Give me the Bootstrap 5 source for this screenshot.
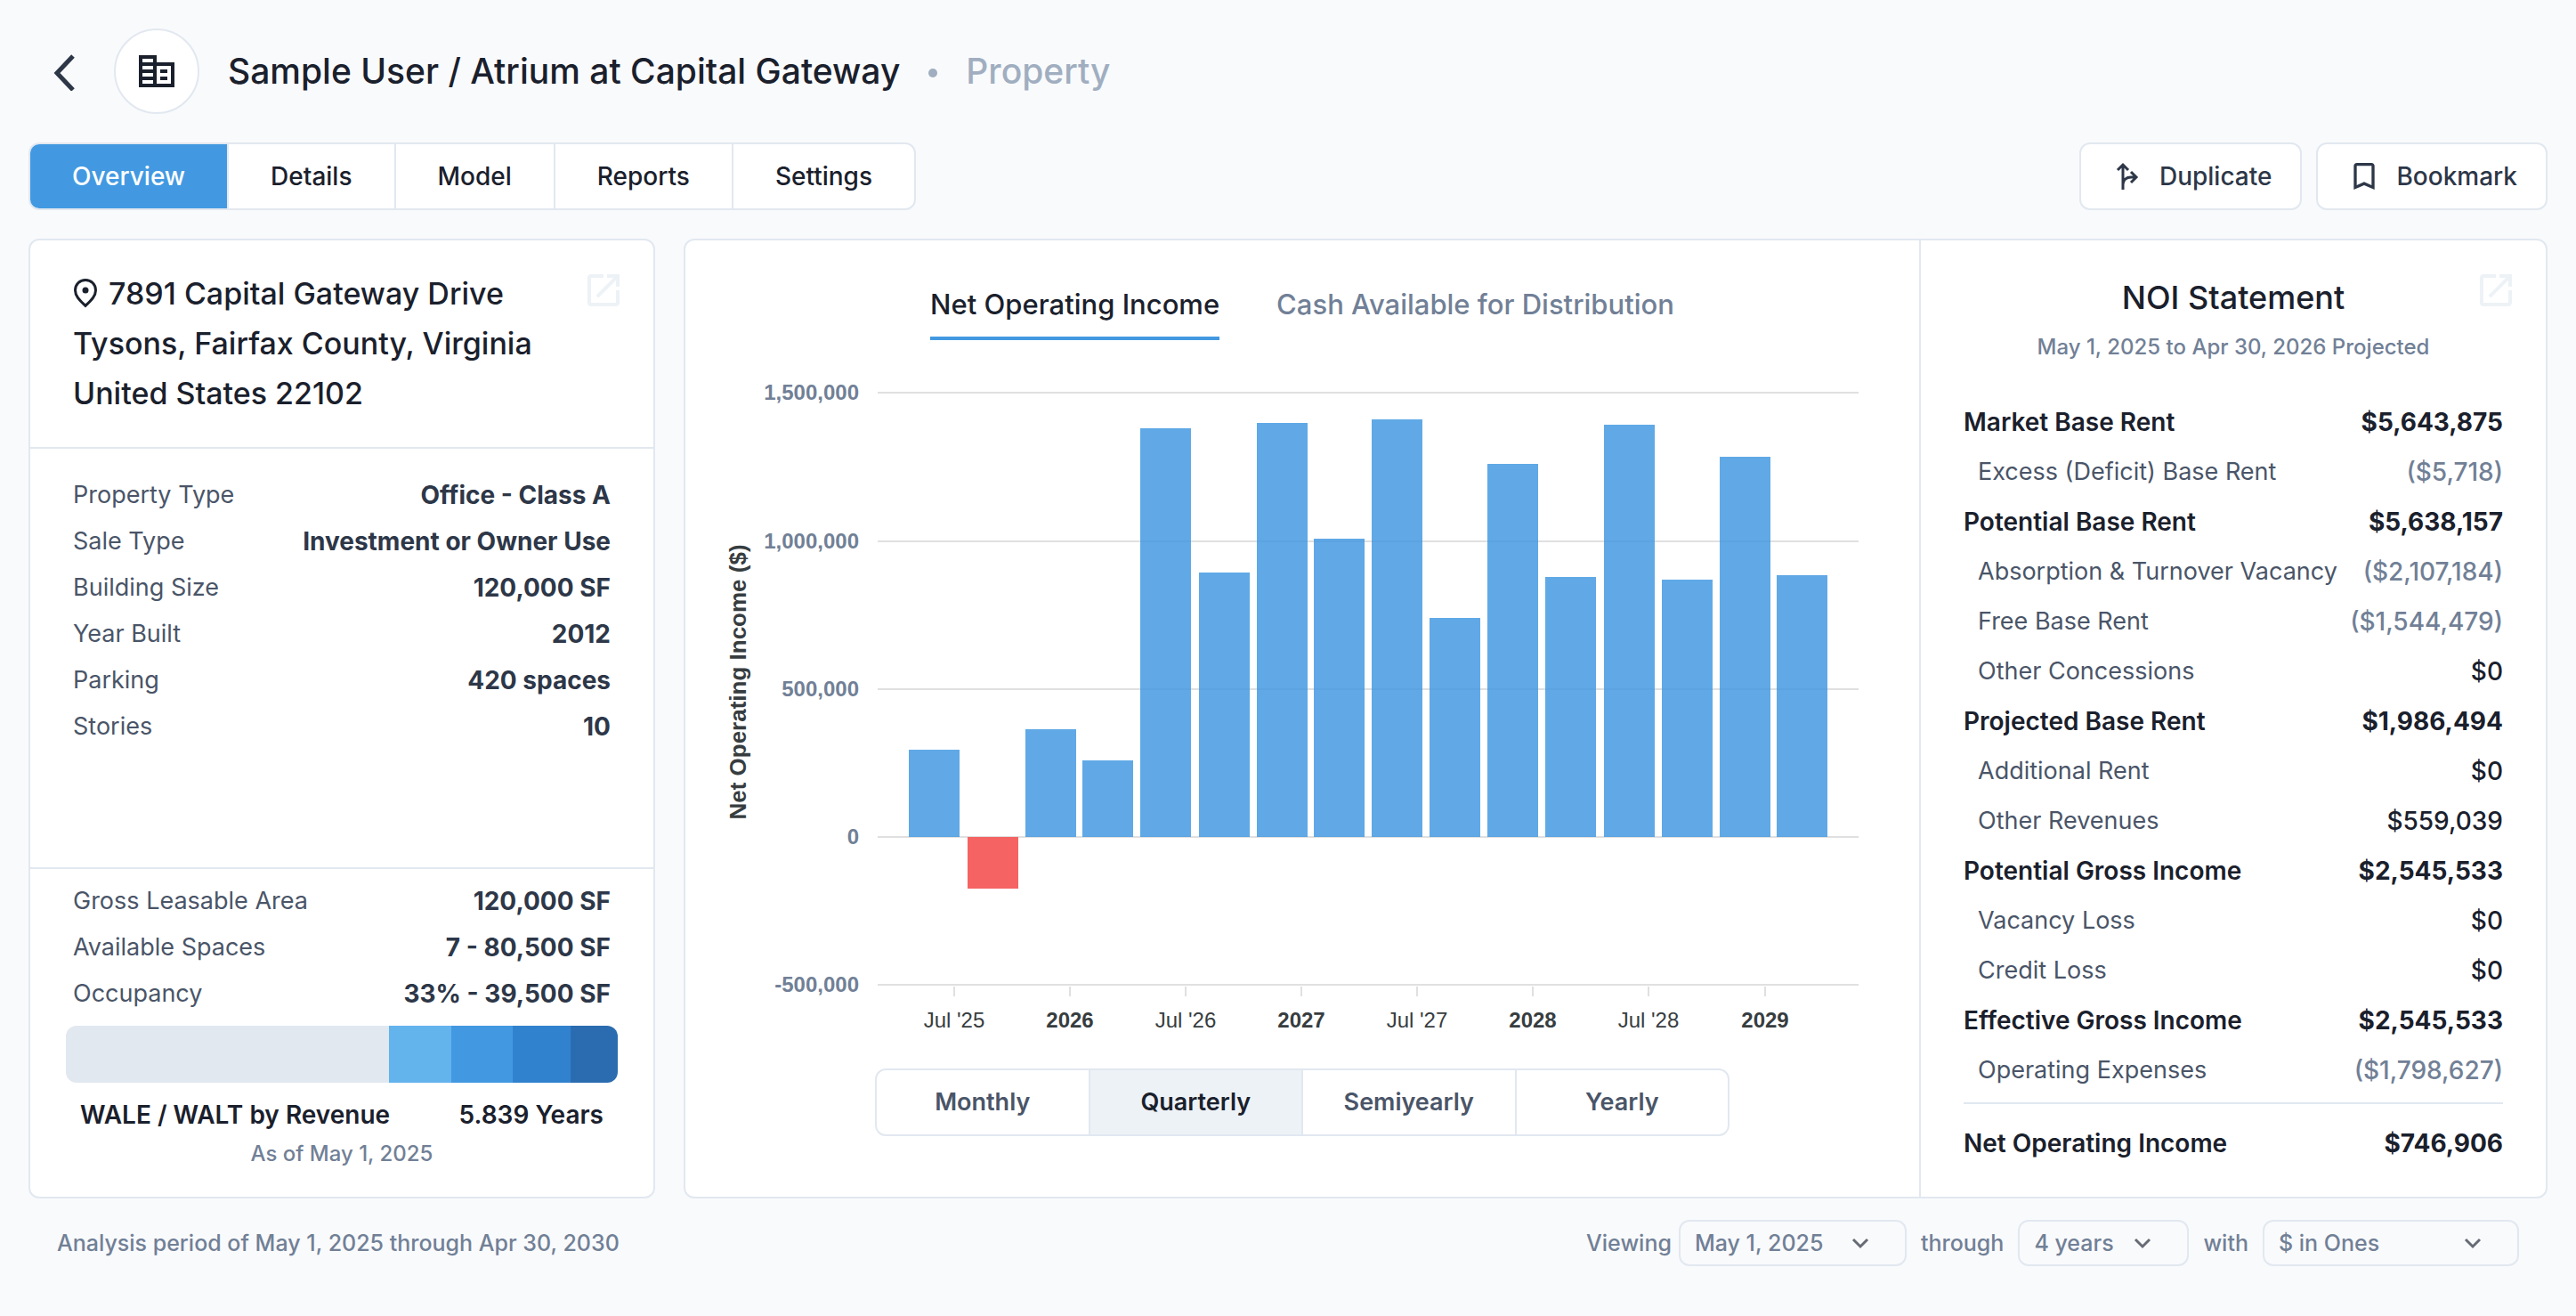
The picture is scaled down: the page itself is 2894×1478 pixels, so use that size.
<!DOCTYPE html>
<html lang="en">
<head>
<meta charset="utf-8">
<meta name="viewport" content="width=device-width, initial-scale=1">
<title>Atrium at Capital Gateway</title>
<link href="https://cdn.jsdelivr.net/npm/bootstrap@5.3.0/dist/css/bootstrap.min.css" rel="stylesheet">
<style>
  :root {
    --line: #e2e8f0;
    --ink: #1a202c;
    --ink-2: #2d3748;
    --ink-3: #4a5568;
    --ink-4: #718096;
    --ink-5: #a0aec0;
    --accent: #4299e1;
  }
  body { font-family: Inter, "Liberation Sans", sans-serif; background: #f9fafc; color: var(--ink); font-size: 28px; }
  .page { padding: 32px; }
  svg { display: block; flex: none; }
  a { text-decoration: none; }

  .back-link { width: 32px; margin: 0 40px 0 24px; color: var(--ink-2); }
  .avatar { width: 96px; height: 96px; border: 2px solid var(--line); border-radius: 50%; background: #fff; }
  .page-title { font-size: 39px; line-height: 56px; font-weight: 500; }
  .page-title .dot { width: 10px; height: 10px; border-radius: 50%; background: var(--ink-5); margin: 4px 32px 0; }
  .page-title .kind { color: var(--ink-5); }
  .toolbar { margin: 32px 0; }
  .panels { gap: 32px; }

  .seg { border: 2px solid var(--line); border-radius: 12px; background: #fff; overflow: hidden; }
  .seg .seg-item { border: 0; border-left: 2px solid var(--line); background: transparent; color: var(--ink);
    font-size: 28px; line-height: 40px; font-weight: 500; padding: 16px 47px; text-align: center; }
  .seg .seg-item:first-child { border-left: 0; }
  .seg-main .seg-item.active { background: var(--accent); color: #fff; }
  .seg-period { width: 960px; margin: 0 auto; }
  .seg-period .seg-item { flex: 1 1 0; padding: 16px 0; font-size: 27px; color: var(--ink-3); font-weight: 600; }
  .seg-period .seg-item.active { background: #edf2f7; color: var(--ink); }

  .tool-btn { border: 2px solid var(--line); border-radius: 12px; background: #fff; color: var(--ink-2);
    font-size: 28px; line-height: 40px; font-weight: 500; padding: 16px 32px; gap: 16px; }

  .panel { background: #fff; border: 2px solid var(--line); border-radius: 12px; }
  .panel-side { width: 704px; flex: none; }
  .panel-noi { width: 704px; flex: none; border-left: 2px solid var(--line); }
  .open-link { color: #edf2f7; }
  .address { font-size: 34px; line-height: 56px; font-weight: 500; padding: 32px 32px 32px 48px; border-bottom: 2px solid var(--line); }
  .address address { line-height: 56px; }
  .address .pin { display: inline-block; margin-right: 12px; vertical-align: -4px; }

  .facts { padding: 26px 48px; }
  .facts-space { padding: 10px 40px 32px; border-top: 2px solid var(--line); }
  .fact { line-height: 52px; }
  .facts-space .fact { padding: 0 8px; }
  .fact dt { font-size: 27px; font-weight: 400; color: var(--ink-3); }
  .fact dd { font-weight: 700; color: var(--ink-2); margin: 0; }
  .stack-bar { height: 64px; border-radius: 12px; margin: 10px 0 16px; overflow: hidden; }
  .wale { font-weight: 600; line-height: 40px; padding: 0 16px; }
  .note { font-size: 24px; line-height: 32px; font-weight: 500; color: var(--ink-4); }

  .chart-tabs { gap: 64px; padding-top: 40px; }
  .chart-tabs a { font-size: 31px; line-height: 64px; font-weight: 500; color: var(--ink-4); padding-bottom: 4px; border-bottom: 4px solid transparent; }
  .chart-tabs a.active { color: var(--ink); border-color: var(--accent); }
  .chart { width: 100%; height: auto; font-family: "Liberation Sans", Arial, sans-serif; font-size: 24px; }

  .noi-head { padding-top: 40px; }
  .noi-head h2 { font-size: 36px; line-height: 48px; font-weight: 500; margin: 0 0 16px; }
  .noi-open { top: 32px; right: 32px; }
  .noi-box { padding: 40px 48px 32px; }
  .noi-table { width: 100%; }
  .noi-table th, .noi-table td { line-height: 56px; padding: 0; white-space: nowrap; }
  .noi-table th { font-size: 27px; font-weight: 400; color: var(--ink-3); padding-left: 16px; }
  .noi-table td { text-align: right; font-weight: 500; }
  .noi-table td.neg { color: var(--ink-4); }
  .noi-table .sum th { font-size: 28px; font-weight: 600; color: var(--ink); padding-left: 0; }
  .noi-table .sum td { font-weight: 700; }
  .noi-table tbody tr:last-child > * { padding-bottom: 8px; }
  .noi-table tfoot tr > * { border-top: 2px solid var(--line); padding-top: 16px; }

  .foot { font-size: 25px; line-height: 52px; font-weight: 500; color: var(--ink-4); padding: 24px 32px 0; }
  .foot .form-select { height: 52px; border: 2px solid var(--line); border-radius: 12px; padding: 0 56px 0 16px;
    font-size: 25px; line-height: 32px; font-weight: 500; color: var(--ink-4); background-color: transparent;
    background-image: url("data:image/svg+xml,%3Csvg xmlns='http://www.w3.org/2000/svg' viewBox='0 0 24 24'%3E%3Cpath d='M4 8l8 8 8-8' fill='none' stroke='%23666b75' stroke-width='3'/%3E%3C/svg%3E");
    background-position: right 38px center; background-size: 24px 24px; }
  .sel-date { width: 256px; }
  .sel-span { width: 192px; }
  .sel-unit { width: 288px; }
</style>
</head>
<body>
<div class="page">
  <header class="d-flex align-items-center">
    <a href="#" class="back-link" aria-label="Back">
      <svg width="32" height="44" viewBox="0 0 32 44" fill="none" stroke="currentColor" stroke-width="5"><path d="M26 5 8 24l18 19"/></svg>
    </a>
    <span class="avatar d-flex align-items-center justify-content-center">
      <svg width="40" height="36" viewBox="0 0 10 9" fill="#1a202c" fill-rule="evenodd" shape-rendering="crispEdges"><path d="M0 0h5v2h5v7H0zM1 1v1h3V1zM1 3v1h3V3zM1 5v1h3V5zM1 7v1h3V7zM5 3v5h4V3z"/><path d="M6 4h2v1H6zM6 6h2v1H6z"/></svg>
    </span>
    <h1 class="page-title d-flex align-items-center mb-0 ps-4 ms-2">
      <span>Sample User / Atrium at Capital Gateway</span><span class="dot"></span><span class="kind">Property</span>
    </h1>
  </header>

  <div class="toolbar d-flex justify-content-between">
    <nav class="seg seg-main d-flex" aria-label="Sections">
      <a href="#" class="seg-item active" aria-current="page">Overview</a>
      <a href="#" class="seg-item">Details</a>
      <a href="#" class="seg-item">Model</a>
      <a href="#" class="seg-item">Reports</a>
      <a href="#" class="seg-item">Settings</a>
    </nav>
    <div class="d-flex gap-3">
      <button type="button" class="tool-btn d-flex align-items-center">
        <svg width="40" height="40" viewBox="0 0 40 40" fill="none" stroke="currentColor" stroke-width="3"><path d="M15 35V8M9 13l6-6 6 6M15 29c0-5 4-8 9-8h6M24 15l6 6-6 6"/></svg>
        Duplicate
      </button>
      <button type="button" class="tool-btn d-flex align-items-center">
        <svg width="40" height="40" viewBox="0 0 24 24" fill="currentColor"><path d="M17 3H7c-1.100 0-1.990.9-1.990 2L5 21l7-3 7 3V5c0-1.100-.9-2-2-2zm0 15l-5-2.180L7 18V5h10v13z"/></svg>
        Bookmark
      </button>
    </div>
  </div>

  <main class="panels d-flex align-items-stretch">
    <section class="panel panel-side d-flex flex-column">
      <div class="address d-flex justify-content-between">
        <address class="mb-0"><svg class="pin" width="28" height="34" viewBox="0 0 28 34"><path d="M14 2.500C7.500 2.500 2.500 7.500 2.500 14c0 7 6 12 11.500 17.500C19.500 26 25.500 21 25.500 14c0-6.500-5-11.500-11.500-11.500z" fill="none" stroke="#1a202c" stroke-width="3"/><circle cx="14" cy="14" r="3.500" fill="#1a202c"/></svg>7891 Capital Gateway Drive<br>Tysons, Fairfax County, Virginia<br>United States 22102</address>
        <a href="#" class="open-link" aria-label="Open address"><svg width="48" height="48" viewBox="0 0 24 24" fill="currentColor"><path d="M19 19H5V5h7V3H5a2 2 0 0 0-2 2v14a2 2 0 0 0 2 2h14c1.100 0 2-.9 2-2v-7h-2v7zM14 3v2h3.590l-9.830 9.830 1.410 1.410L19 6.410V10h2V3h-7z"/></svg></a>
      </div>
      <dl class="facts flex-grow-1 mb-0">
        <div class="fact d-flex justify-content-between"><dt>Property Type</dt><dd>Office - Class A</dd></div>
        <div class="fact d-flex justify-content-between"><dt>Sale Type</dt><dd>Investment or Owner Use</dd></div>
        <div class="fact d-flex justify-content-between"><dt>Building Size</dt><dd>120,000 SF</dd></div>
        <div class="fact d-flex justify-content-between"><dt>Year Built</dt><dd>2012</dd></div>
        <div class="fact d-flex justify-content-between"><dt>Parking</dt><dd>420 spaces</dd></div>
        <div class="fact d-flex justify-content-between"><dt>Stories</dt><dd>10</dd></div>
      </dl>
      <div class="facts-space">
        <dl class="mb-0">
          <div class="fact d-flex justify-content-between"><dt>Gross Leasable Area</dt><dd>120,000 SF</dd></div>
          <div class="fact d-flex justify-content-between"><dt>Available Spaces</dt><dd>7 - 80,500 SF</dd></div>
          <div class="fact d-flex justify-content-between"><dt>Occupancy</dt><dd>33% - 39,500 SF</dd></div>
        </dl>
        <div class="stack-bar d-flex" role="img" aria-label="Leased area by tenant">
          <div style="width:58.6%;background:#e2e8f0"></div>
          <div style="width:11.3%;background:#63b3ed"></div>
          <div style="width:11.1%;background:#4299e1"></div>
          <div style="width:10.4%;background:#3182ce"></div>
          <div style="width:8.6%;background:#2b6cb0"></div>
        </div>
        <div class="wale d-flex justify-content-between mb-2"><span>WALE / WALT by Revenue</span><span>5.839 Years</span></div>
        <div class="note text-center">As of May 1, 2025</div>
      </div>
    </section>

    <section class="panel d-flex flex-grow-1">
      <div class="flex-grow-1">
        <nav class="chart-tabs d-flex justify-content-center" aria-label="Chart">
          <a href="#" class="active" aria-current="true">Net Operating Income</a>
          <a href="#">Cash Available for Distribution</a>
        </nav>
        <svg class="chart" id="chart" viewBox="0 0 1386 818" role="img" aria-label="Net operating income by quarter"></svg>
        <div class="seg seg-period d-flex" role="group" aria-label="Period">
          <button type="button" class="seg-item">Monthly</button>
          <button type="button" class="seg-item active" aria-pressed="true">Quarterly</button>
          <button type="button" class="seg-item">Semiyearly</button>
          <button type="button" class="seg-item">Yearly</button>
        </div>
      </div>
      <div class="panel-noi position-relative">
        <div class="noi-head text-center">
          <h2>NOI Statement</h2>
          <div class="note">May 1, 2025 to Apr 30, 2026 Projected</div>
        </div>
        <a href="#" class="open-link noi-open position-absolute" aria-label="Open statement"><svg width="48" height="48" viewBox="0 0 24 24" fill="currentColor"><path d="M19 19H5V5h7V3H5a2 2 0 0 0-2 2v14a2 2 0 0 0 2 2h14c1.100 0 2-.9 2-2v-7h-2v7zM14 3v2h3.590l-9.830 9.830 1.410 1.410L19 6.410V10h2V3h-7z"/></svg></a>
        <div class="noi-box">
          <table class="noi-table">
            <tbody>
              <tr class="sum"><th scope="row">Market Base Rent</th><td>$5,643,875</td></tr>
              <tr><th scope="row">Excess (Deficit) Base Rent</th><td class="neg">($5,718)</td></tr>
              <tr class="sum"><th scope="row">Potential Base Rent</th><td>$5,638,157</td></tr>
              <tr><th scope="row">Absorption &amp; Turnover Vacancy</th><td class="neg">($2,107,184)</td></tr>
              <tr><th scope="row">Free Base Rent</th><td class="neg">($1,544,479)</td></tr>
              <tr><th scope="row">Other Concessions</th><td>$0</td></tr>
              <tr class="sum"><th scope="row">Projected Base Rent</th><td>$1,986,494</td></tr>
              <tr><th scope="row">Additional Rent</th><td>$0</td></tr>
              <tr><th scope="row">Other Revenues</th><td>$559,039</td></tr>
              <tr class="sum"><th scope="row">Potential Gross Income</th><td>$2,545,533</td></tr>
              <tr><th scope="row">Vacancy Loss</th><td>$0</td></tr>
              <tr><th scope="row">Credit Loss</th><td>$0</td></tr>
              <tr class="sum"><th scope="row">Effective Gross Income</th><td>$2,545,533</td></tr>
              <tr><th scope="row">Operating Expenses</th><td class="neg">($1,798,627)</td></tr>
            </tbody>
            <tfoot>
              <tr class="sum"><th scope="row">Net Operating Income</th><td>$746,906</td></tr>
            </tfoot>
          </table>
        </div>
      </div>
    </section>
  </main>

  <footer class="foot d-flex justify-content-between">
    <span>Analysis period of May 1, 2025 through Apr 30, 2030</span>
    <form class="d-flex gap-3">
      <span class="d-flex gap-2"><label for="view-from">Viewing</label>
      <select id="view-from" class="form-select sel-date"><option>May 1, 2025</option></select></span>
      <label for="view-span">through</label>
      <select id="view-span" class="form-select sel-span"><option>4 years</option></select>
      <label for="view-unit">with</label>
      <select id="view-unit" class="form-select sel-unit"><option>$ in Ones</option></select>
    </form>
  </footer>
</div>
<script src="https://cdn.jsdelivr.net/npm/bootstrap@5.3.0/dist/js/bootstrap.bundle.min.js"></script>
<script>
  // Quarterly bars on a time axis: [left edge of the bar, income in thousands of dollars]
  const bars = [[251, 296], [317, -174], [382, 363], [446, 258], [511, 1379], [577, 893], [642, 1399], [706, 1008],
    [771, 1411], [836, 740], [901, 1259], [966, 878], [1032, 1391], [1097, 869], [1162, 1284], [1226, 883]];
  const ticks = [[302, "Jul '25"], [432, '2026'], [562, "Jul '26"], [692, '2027'], [822, "Jul '27"], [952, '2028'], [1082, "Jul '28"], [1213, '2029']];
  const zero = 558, perK = 0.3325;
  let out = '';
  for (const v of [1500, 1000, 500, 0, -500]) {
    const y = Math.round(zero - v * perK);
    out += `<path d="M216 ${y}H1318" stroke="#e0e0e0" stroke-width="2"/>`;
    out += `<text x="195" y="${y + 8}" text-anchor="end" font-weight="700" fill="#718096">${(v * 1000).toLocaleString('en-US')}</text>`;
  }
  for (const [x, v] of bars) {
    const h = Math.round(Math.abs(v) * perK);
    out += v < 0
      ? `<rect x="${x}" y="${zero}" width="57" height="${h}" fill="#f56363"/>`
      : `<rect x="${x}" y="${zero - h}" width="57" height="${h}" fill="#4299e1" fill-opacity=".84"/>`;
  }
  for (const [x, t] of ticks) {
    const year = t.startsWith('20');
    out += `<path d="M${x} 726v11" stroke="#e0e0e0" stroke-width="2"/>`;
    out += `<text x="${x}" y="772" text-anchor="middle" font-weight="${year ? 700 : 400}" fill="#373d3f">${t}</text>`;
  }
  out += '<text transform="translate(68 384) rotate(-90)" text-anchor="middle" font-size="26" font-weight="700" fill="#373d3f">Net Operating Income ($)</text>';
  document.getElementById('chart').innerHTML = out;
</script>
</body>
</html>
